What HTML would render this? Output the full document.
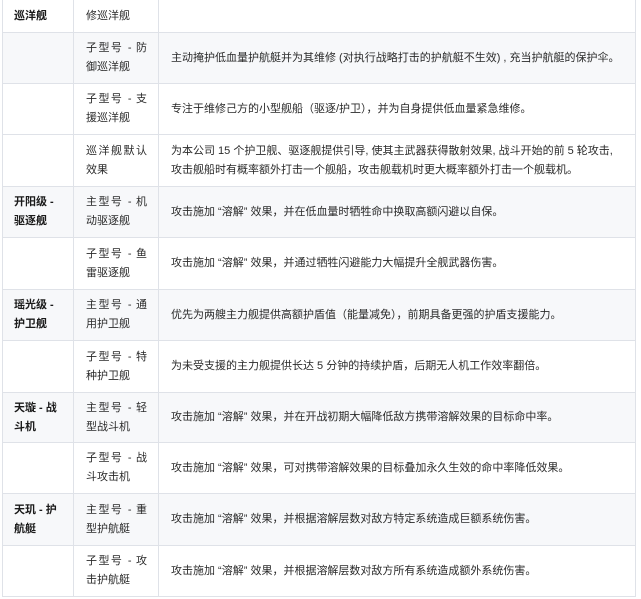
<!DOCTYPE html>
<html><head><meta charset="utf-8"><style>
body{margin:0;background:#fff;font-family:"Liberation Sans","Noto Sans CJK SC",sans-serif;font-size:11px;color:#2a2a2a;}
table{position:absolute;left:2px;top:-1px;border-collapse:collapse;width:634px;table-layout:fixed;}
td{border:1px solid #dfe2e8;padding:0;vertical-align:middle;line-height:19px;overflow:hidden;}
td.a{width:59px;padding-left:11px;font-weight:bold;color:#1a1a1a;}
td.b{width:72px;padding-left:12px;}
td.c{padding-left:12px;padding-right:4px;}
tr.g td{background:#f7f8fa;}
.j{width:61px;text-align:justify;text-align-last:justify;}
</style></head><body>
<table>
<tr style="height:33px"><td class="a">巡洋舰</td><td class="b">修巡洋舰</td><td class="c"></td></tr>
<tr class="g" style="height:51px"><td class="a"></td><td class="b"><div class="j">子型号 - 防</div>御巡洋舰</td><td class="c">主动掩护低血量护航艇并为其维修 (对执行战略打击的护航艇不生效) , 充当护航艇的保护伞。</td></tr>
<tr style="height:51px"><td class="a"></td><td class="b"><div class="j">子型号 - 支</div>援巡洋舰</td><td class="c">专注于维修己方的小型舰船（驱逐/护卫），并为自身提供低血量紧急维修。</td></tr>
<tr style="height:52px"><td class="a"></td><td class="b"><div class="j">巡洋舰默认</div>效果</td><td class="c">为本公司 15 个护卫舰、驱逐舰提供引导, 使其主武器获得散射效果, 战斗开始的前 5 轮攻击,<br>攻击舰船时有概率额外打击一个舰船，攻击舰载机时更大概率额外打击一个舰载机。</td></tr>
<tr class="g" style="height:51px"><td class="a">开阳级 -<br>驱逐舰</td><td class="b"><div class="j">主型号 - 机</div>动驱逐舰</td><td class="c">攻击施加 “溶解” 效果，并在低血量时牺牲命中换取高额闪避以自保。</td></tr>
<tr style="height:52px"><td class="a"></td><td class="b"><div class="j">子型号 - 鱼</div>雷驱逐舰</td><td class="c">攻击施加 “溶解” 效果，并通过牺牲闪避能力大幅提升全舰武器伤害。</td></tr>
<tr class="g" style="height:51px"><td class="a">瑶光级 -<br>护卫舰</td><td class="b"><div class="j">主型号 - 通</div>用护卫舰</td><td class="c">优先为两艘主力舰提供高额护盾值（能量减免），前期具备更强的护盾支援能力。</td></tr>
<tr style="height:52px"><td class="a"></td><td class="b"><div class="j">子型号 - 特</div>种护卫舰</td><td class="c">为未受支援的主力舰提供长达 5 分钟的持续护盾，后期无人机工作效率翻倍。</td></tr>
<tr class="g" style="height:50px"><td class="a">天璇 - 战<br>斗机</td><td class="b"><div class="j">主型号 - 轻</div>型战斗机</td><td class="c">攻击施加 “溶解” 效果，并在开战初期大幅降低敌方携带溶解效果的目标命中率。</td></tr>
<tr style="height:51px"><td class="a"></td><td class="b"><div class="j">子型号 - 战</div>斗攻击机</td><td class="c">攻击施加 “溶解” 效果，可对携带溶解效果的目标叠加永久生效的命中率降低效果。</td></tr>
<tr class="g" style="height:52px"><td class="a">天玑 - 护<br>航艇</td><td class="b"><div class="j">主型号 - 重</div>型护航艇</td><td class="c">攻击施加 “溶解” 效果，并根据溶解层数对敌方特定系统造成巨额系统伤害。</td></tr>
<tr style="height:51px"><td class="a"></td><td class="b"><div class="j">子型号 - 攻</div>击护航艇</td><td class="c">攻击施加 “溶解” 效果，并根据溶解层数对敌方所有系统造成额外系统伤害。</td></tr>
</table>
</body></html>
